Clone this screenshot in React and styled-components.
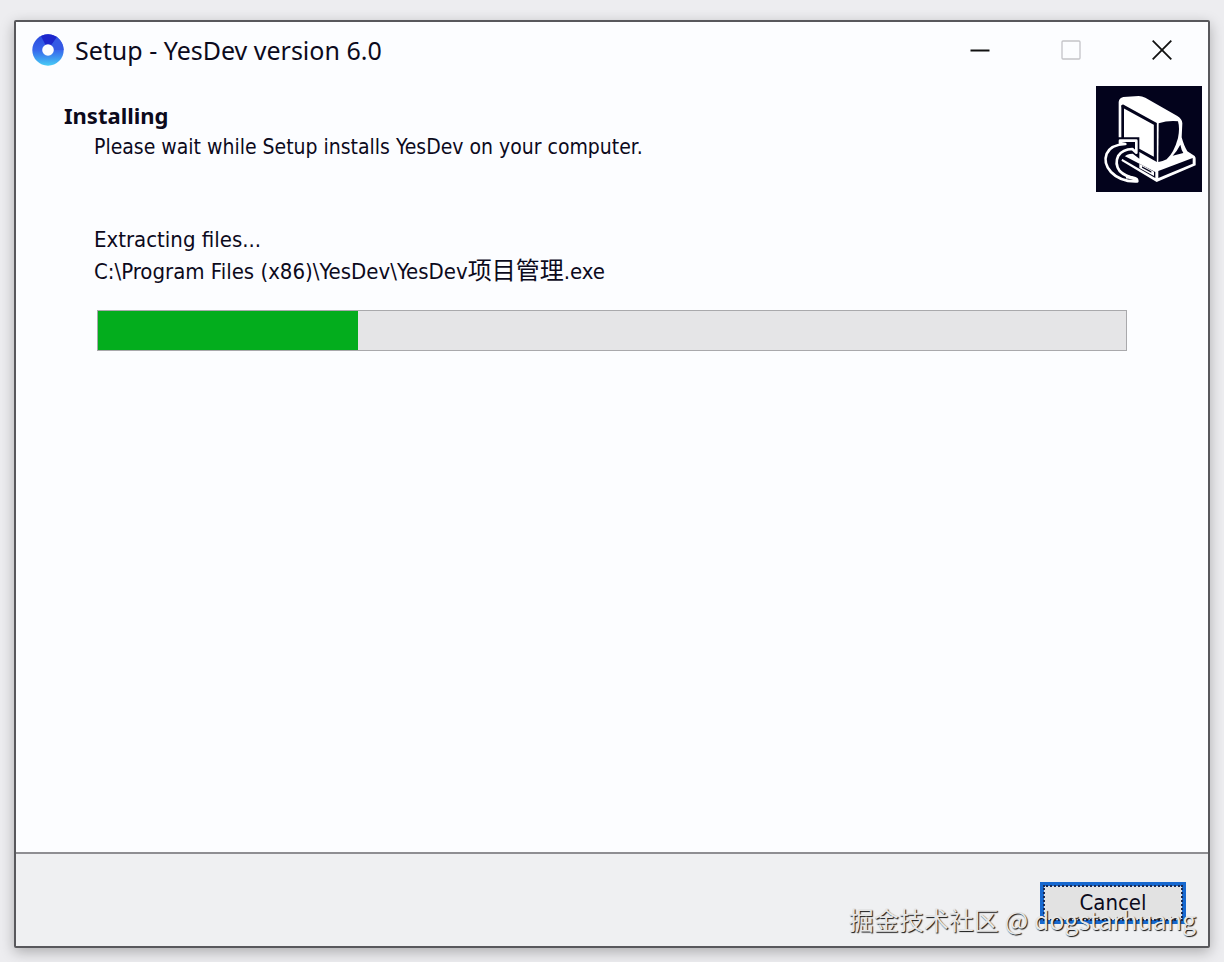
import React from "react";
import styled, { createGlobalStyle } from "styled-components";

const App = () => {
  return (
    <>
      <GlobalStyle />
      <Desktop>
        <Window>
          <TitleBar>
            <AppIcon />
            <Title>Setup - YesDev version 6.0</Title>
            <WindowBtn aria-label="Minimize">
              <svg width="20" height="20" viewBox="0 0 20 20">
                <path d="M0.5 10.5H19.5" stroke="#111" strokeWidth="2" />
              </svg>
            </WindowBtn>
            <WindowBtn aria-label="Maximize" disabled>
              <svg width="20" height="20" viewBox="0 0 20 20">
                <rect x="1" y="1" width="18" height="18" rx="1" fill="none" stroke="#c4c4c8" strokeWidth="1.3" />
              </svg>
            </WindowBtn>
            <WindowBtn aria-label="Close">
              <svg width="20" height="20" viewBox="0 0 20 20">
                <path d="M0.7 0.7L19.3 19.3M19.3 0.7L0.7 19.3" stroke="#111" strokeWidth="1.8" />
              </svg>
            </WindowBtn>
          </TitleBar>
          <Header>
            <HeaderText>
              <h1>Installing</h1>
              <p>Please wait while Setup installs YesDev on your computer.</p>
            </HeaderText>
            <SetupLogo />
          </Header>
          <Content>
            <label htmlFor="progress">Extracting files...</label>
            <p>
              C:\Program Files (x86)\YesDev\YesDev<Han lang="zh-CN">项目管理</Han>.exe
            </p>
            <Progress id="progress" max="1000" value="253" />
          </Content>
          <Footer>
            <CancelBtn>Cancel</CancelBtn>
            <Watermark lang="zh-CN">掘金技术社区 @ dogstarhuang</Watermark>
          </Footer>
        </Window>
      </Desktop>
    </>
  );
};

export default App;

const AppIcon = () => (
  <svg width="32" height="32" viewBox="0 0 32 32" aria-hidden="true">
    <defs>
      <linearGradient id="ring" x1="0" y1="0" x2="0" y2="1">
        <stop offset="0" stopColor="#2a48dc" />
        <stop offset="0.5" stopColor="#3866ec" />
        <stop offset="0.75" stopColor="#3d97f0" />
        <stop offset="1" stopColor="#48cdf6" />
      </linearGradient>
    </defs>
    <circle cx="16" cy="16" r="15.7" fill="url(#ring)" />
    <path d="M16 16L9 2Q17 -2 25 3Z" fill="#1d26cc" />
    <path d="M16 16L25 3Q31 8 31.6 16Z" fill="#3558e4" />
    <circle cx="16" cy="16" r="5.8" fill="#fcfdff" />
  </svg>
);

const SetupLogo = () => (
  <Logo viewBox="30 30 318 318" aria-hidden="true">
    <rect x="30" y="30" width="318" height="318" fill="#03031c" />
    {/* monitor */}
    <path d="M98 184V78Q99 66 112 63L158 60Q168 60 178 65L274 120Q288 128 289 142L287 184Q294 210 304 226L326 240Q330 244 329 252V268L212 318L102 252L98 240Z" fill="#fff" />
    <path d="M108 89L208 144V250L158 222" fill="none" stroke="#03031c" strokeWidth="9" />
    <path d="M110 186V87" fill="none" stroke="#03031c" strokeWidth="8" />
    <path d="M218 142Q246 133 276 136Q282 158 276 186Q264 230 242 250Q230 256 217 258Z" fill="#03031c" />
    <path d="M283 206Q286 222 292 231L260 239Q274 224 283 206Z" fill="#03031c" />
    {/* base */}
    <path d="M217 285L320 246V263L217 306Z" fill="#03031c" />
    <path d="M104 234L208 288V306L104 246Z" fill="#03031c" />
    <path d="M160 263L204 287V300L160 276Z" fill="#fff" />
    <path d="M168 271L196 286V290L168 275Z" fill="#03031c" />
    {/* arrow */}
    <path d="M98 188H156V240L142 229Q121 228 107 243Q95 262 108 284Q122 298 150 303L153 316Q104 319 74 288Q49 262 60 231Q72 206 98 202Z" fill="#03031c" stroke="#03031c" strokeWidth="8" />
    <path d="M102 194H151V230L139 219Q110 220 97 239Q85 263 101 285Q118 302 146 306Q154 308 154 316Q103 318 75 288Q51 261 62 233Q74 206 118 204L102 201Z" fill="#03031c" stroke="#fff" strokeWidth="8" strokeLinejoin="round" />
    <path d="M120 303Q140 304 152 313" fill="none" stroke="#fff" strokeWidth="9" />
  </Logo>
);

const GlobalStyle = createGlobalStyle`
  * {
    box-sizing: border-box;
  }

  body {
    margin: 0;
    background: #ededf0;
    color: #0c0a1c;
    font-family: "DejaVu Sans Condensed", "Noto Sans CJK SC", sans-serif;
    font-size: 22px;
    line-height: 32px;
  }

  h1, p {
    margin: 0;
  }
`;

const Desktop = styled.div`
  display: flex;
  min-height: 100vh;
  padding: 20px 14px 14px;
`;

const Window = styled.main`
  flex: 1;
  display: flex;
  flex-direction: column;
  background: #fcfdff;
  border: 2px solid #58585c;
  border-radius: 2px;
  box-shadow: 0 4px 14px rgba(0, 0, 0, 0.28);
`;

const TitleBar = styled.div`
  display: flex;
  align-items: center;
  height: 56px;
  padding: 0 1px 0 16px;
`;

const Title = styled.div`
  flex: 1;
  padding-left: 11px;
  font-family: "Noto Sans", sans-serif;
  font-size: 25px;
`;

const WindowBtn = styled.button`
  display: grid;
  place-content: center;
  width: 91px;
  height: 56px;
  padding: 0;
  border: none;
  background: none;
`;

const Header = styled.div`
  display: flex;
  justify-content: space-between;
  padding: 8px 6px 0 48px;
`;

const HeaderText = styled.div`
  padding-top: 13px;

  h1 {
    font-family: "Noto Sans", sans-serif;
    font-size: 22px;
    line-height: 32px;
    font-weight: 700;
  }

  p {
    padding-left: 30px;
    font-size: 21px;
  }
`;

const Logo = styled.svg`
  width: 106px;
  height: 106px;
`;

const Content = styled.div`
  flex: 1;
  display: flex;
  flex-direction: column;
  padding: 32px 81px 0 78px;
`;

const Han = styled.span`
  font-family: "Noto Sans CJK SC", sans-serif;
  font-size: 24px;
  line-height: 24px;
`;

const Progress = styled.progress`
  appearance: none;
  align-self: stretch;
  width: auto;
  height: 41px;
  margin-top: 22px;
  margin-left: 3px;
  border: 1px solid #a9a9ac;
  background: #e5e5e7;

  &::-webkit-progress-bar {
    background: #e5e5e7;
  }

  &::-webkit-progress-value {
    background: #03ad1d;
  }
`;

const Footer = styled.div`
  position: relative;
  display: flex;
  justify-content: flex-end;
  padding: 28px 22px 22px;
  border-top: 2px solid #8e8e92;
  background: #eff0f2;
`;

const CancelBtn = styled.button`
  width: 146px;
  height: 42px;
  padding: 0;
  border: 4px solid #1768cf;
  outline: 2px dotted #1a2b55;
  outline-offset: -5px;
  background: #e2e2e2;
  color: #0c0a1c;
  font: inherit;
`;

/* stamp laid over the footer and the button */
const Watermark = styled.div`
  position: absolute;
  right: 12px;
  bottom: 10px;
  font-family: "Noto Sans CJK SC", sans-serif;
  font-size: 25px;
  line-height: 34px;
  color: #e6e6e6;
  text-shadow: 1px 1px 1px #111;
  white-space: nowrap;
  pointer-events: none;
`;
